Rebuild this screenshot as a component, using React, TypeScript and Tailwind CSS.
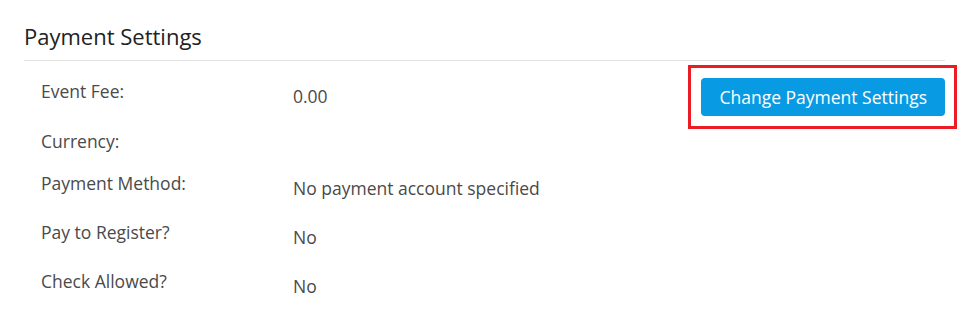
import React from 'react'

type Row = {
  label: string
  value?: string
  height: string
}

const rows: Row[] = [
  { label: 'Currency:', height: 'h-[42px]' },
  { label: 'Payment Method:', value: 'No payment account specified', height: 'h-[49px]' },
  { label: 'Pay to Register?', value: 'No', height: 'h-[49px]' },
  { label: 'Check Allowed?', value: 'No', height: 'h-[49px]' },
]

export default function App() {
  return (
    <div className="min-h-[336px] bg-white font-['Open_Sans',sans-serif] text-[#4a4a4a]">
      <div className="ml-6 mr-8 pt-[22px]">
        <h2 className="border-b border-[#e3e3e3] pb-[10px] text-[22px] leading-[28px] text-[#222]">
          Payment Settings
        </h2>

        <div className="pl-[17px] pt-[18px] text-[17.5px] leading-[24px]">
          <div className="flex h-[50px] items-start">
            <span className="w-[252px] shrink-0">Event Fee:</span>
            <span className="pt-[5px]">0.00</span>
            <div className="relative ml-auto -mt-px">
              <button className="h-[38px] rounded-[4px] bg-[#089be3] px-[18px] text-[17.5px] text-white">
                Change Payment Settings
              </button>
              <div className="pointer-events-none absolute -bottom-[13px] -left-[13px] -right-[12px] -top-[13px] border-[3px] border-[#ec1c24]" />
            </div>
          </div>

          {rows.map((row) => (
            <div key={row.label} className={`flex items-start ${row.height}`}>
              <span className="w-[252px] shrink-0">{row.label}</span>
              {row.value ? <span className="pt-[5px]">{row.value}</span> : null}
            </div>
          ))}
        </div>
      </div>
    </div>
  )
}
